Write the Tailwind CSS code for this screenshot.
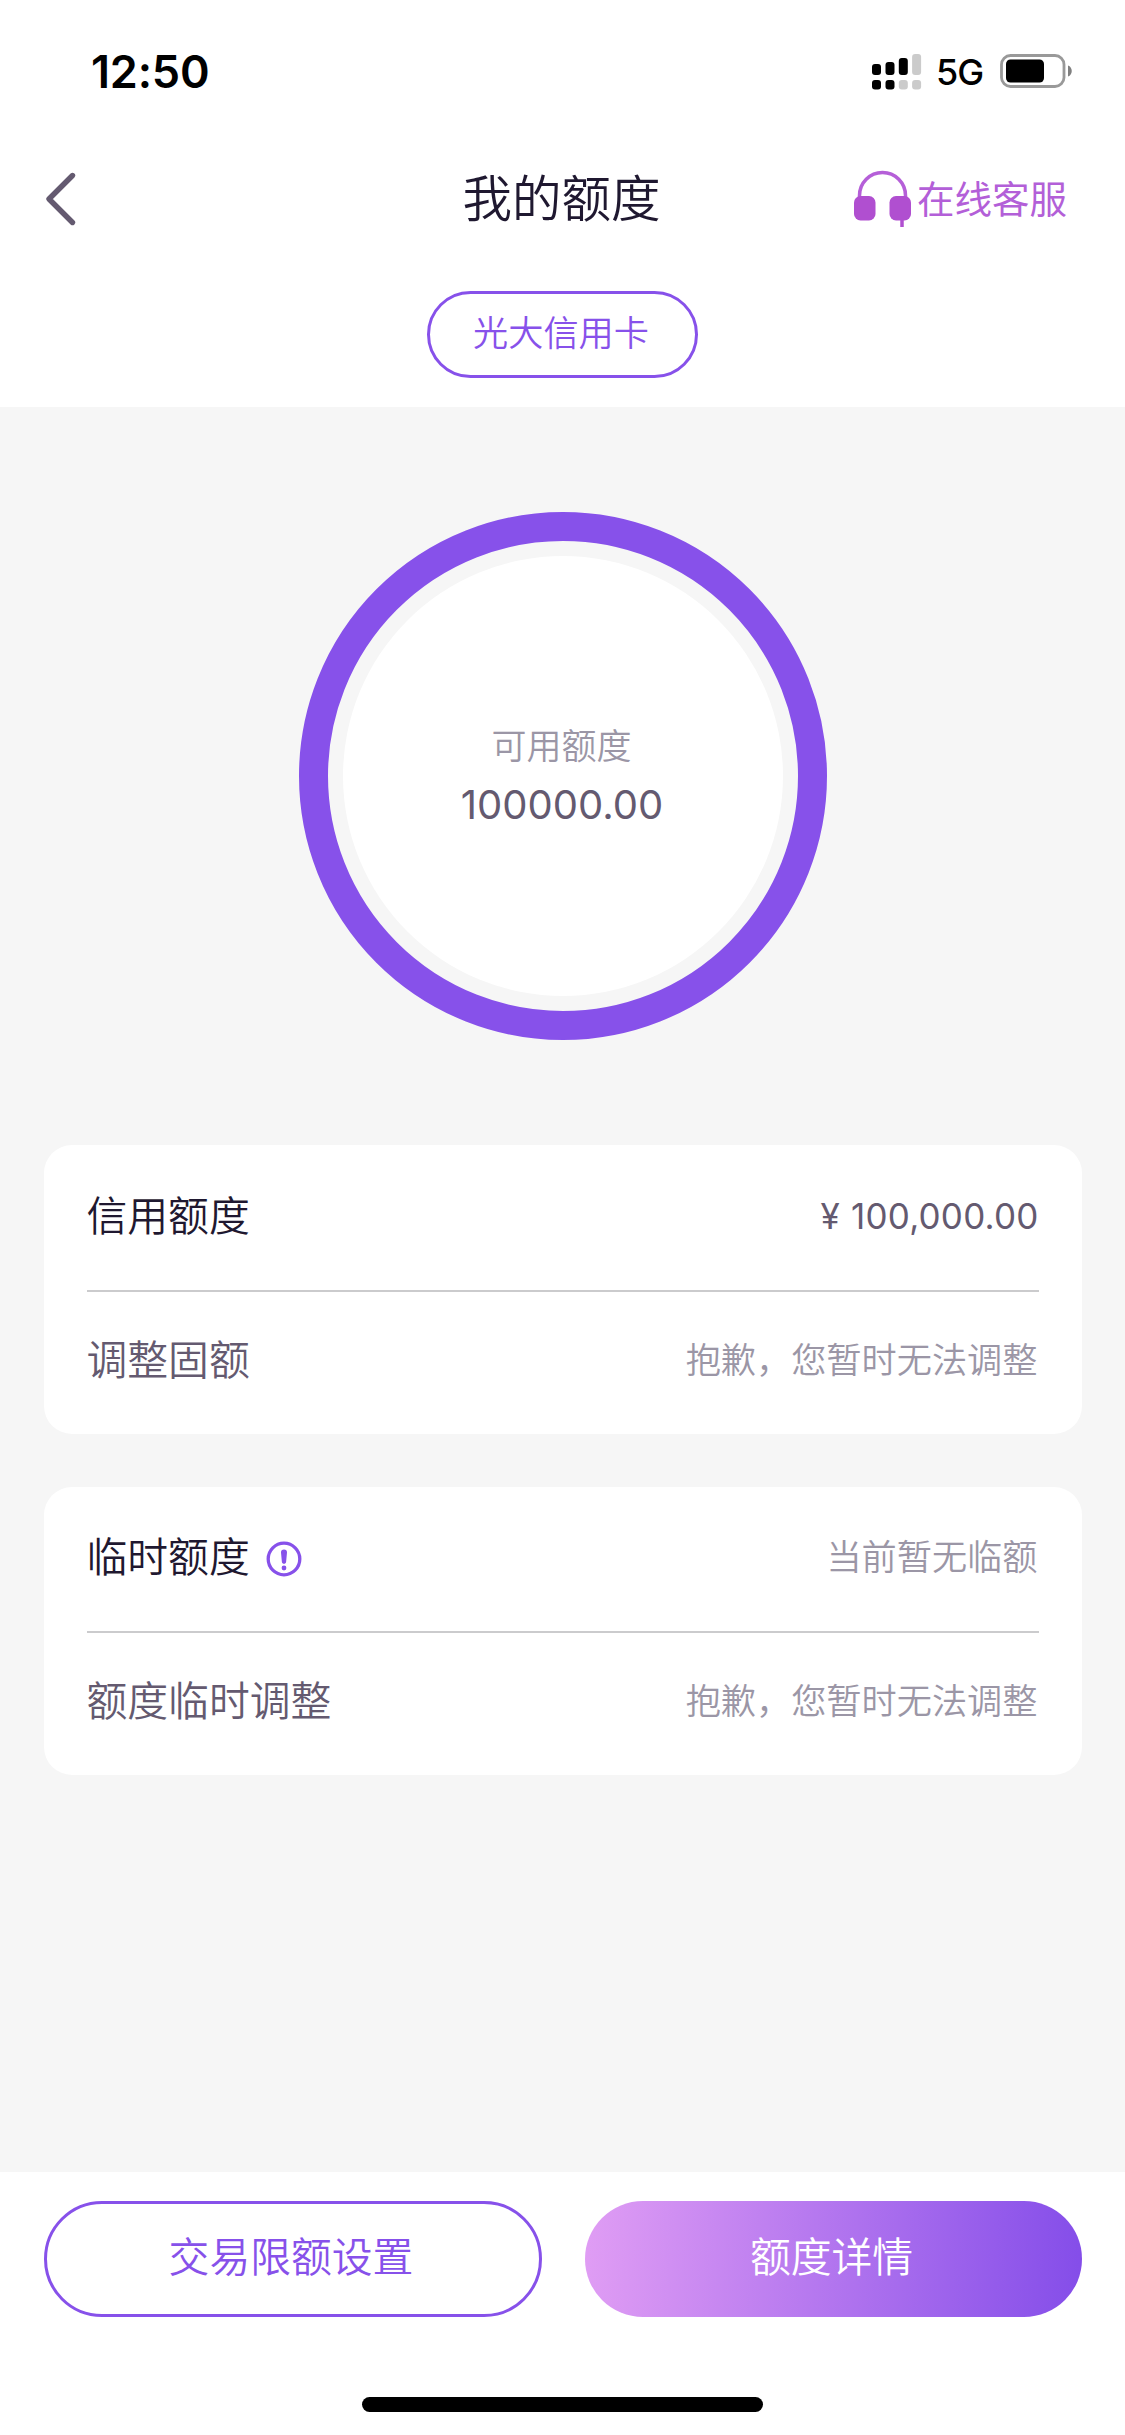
<!DOCTYPE html>
<html lang="zh-CN">
<head>
    <meta charset="UTF-8">
    <meta name="viewport" content="width=device-width, initial-scale=1.0">
    <title>我的额度</title>
    <script src="https://cdn.jsdelivr.net/npm/@tailwindcss/browser@4"></script>
    <style>
        body {
            font-family: 'Inter', 'Noto Sans CJK SC', sans-serif;
        }
    </style>
</head>
<body class="bg-[#f6f6f6] w-[1125px] h-[2435px] flex flex-col overflow-hidden font-[350]">
    <header class="bg-white h-[407px] shrink-0 flex flex-col">
        <!-- status bar -->
        <div class="h-[143px] pl-[91px] pr-[52px] flex items-center justify-between">
            <span class="text-[45px] leading-none font-semibold text-black tracking-[-0.2px]">12:50</span>
            <div class="flex items-center">
                <svg class="w-[50px] h-[36px]" viewBox="0 0 50 36">
                    <rect x="0" y="10" width="9" height="11" rx="3"/>
                    <rect x="13.5" y="8" width="9" height="13" rx="3"/>
                    <rect x="26.8" y="4" width="9" height="17" rx="3"/>
                    <rect x="40.1" y="0" width="9" height="21" rx="3" fill="#cbcbcb"/>
                    <rect x="0" y="26" width="9" height="9.5" rx="3"/>
                    <rect x="13.5" y="26" width="9" height="9.5" rx="3"/>
                    <rect x="26.8" y="26" width="9" height="9.5" rx="3" fill="#cbcbcb"/>
                    <rect x="40.1" y="26" width="9" height="9.5" rx="3" fill="#cbcbcb"/>
                </svg>
                <span class="ml-[14px] w-[49px] text-[36px] leading-none text-black font-medium tracking-[-1px]">5G</span>
                <svg class="ml-[15px] w-[73px] h-[36px]" viewBox="0 0 73 36">
                    <rect x="1.5" y="1.5" width="62.5" height="31" rx="9" fill="none" stroke="#999" stroke-width="2.8"/>
                    <rect x="6" y="5.5" width="38" height="23" rx="4.5"/>
                    <path d="M68 11.5c5 1.5 5 9.5 0 11z" fill="#808080"/>
                </svg>
            </div>
        </div>
        <!-- title bar -->
        <div class="h-[113px] grid grid-cols-3 items-center pl-[45px] pr-[58px]">
            <svg class="w-[32px] h-[56px] -mt-[2px]" viewBox="0 0 32 56" fill="none" stroke="#645a70" stroke-width="5.4" stroke-linecap="round" stroke-linejoin="round">
                <path d="M27.5 4.5L4 28l23.5 23.5"/>
            </svg>
            <h1 class="text-[49.5px] leading-none text-[#1f1830] text-center whitespace-nowrap pl-[11px]">我的额度</h1>
            <a class="flex items-center justify-end gap-[5px] text-[#b35fd8]">
                <svg class="w-[58px] h-[58px] -mt-[1px]" viewBox="0 0 58 58">
                    <path d="M5.5 29v-3.5a23 23 0 0 1 46 0v3.5" fill="none" stroke="#b55fd8" stroke-width="3.5"/>
                    <rect x="0" y="26" width="21.5" height="24.5" rx="6.5" fill="#b04fd0"/>
                    <rect x="35.5" y="26" width="21.5" height="24.5" rx="6.5" fill="#b04fd0"/>
                    <path d="M48 49v8" stroke="#b04fd0" stroke-width="3.5"/>
                </svg>
                <span class="text-[37.5px] leading-none whitespace-nowrap font-normal">在线客服</span>
            </a>
        </div>
        <div class="pt-[35px] flex justify-center">
            <button class="w-[271px] h-[87px] rounded-full border-3 border-[#8751ea] text-[35.2px] leading-none text-[#8751ea] pb-[2px] pr-[3px]">光大信用卡</button>
        </div>
    </header>

    <main class="flex-1 px-[43.5px]">
        <div class="mx-auto mt-[105px] size-[528px] rounded-full border-[29px] border-[#8751ea] flex items-center justify-center">
            <div class="size-[440px] rounded-full bg-white flex flex-col items-center pt-[171px]">
                <p class="text-[35px] leading-[38px] text-[#9b96a6] pr-[2px]">可用额度</p>
                <p class="mt-[20px] text-[40px] leading-[40px] font-normal text-[#645a70] pr-[1px]">100000.00</p>
            </div>
        </div>

        <section class="mt-[105px] h-[289px] rounded-[28px] bg-white px-[43px]">
            <div class="h-[147px] border-b-2 border-[#cbcbcd] flex items-center justify-between pb-[3px]">
                <span class="text-[40.8px] leading-none text-[#1f1830]">信用额度</span>
                <span class="text-[35px] leading-none font-normal text-[#645a70] tracking-[0.2px] [word-spacing:1px]">¥ 100,000.00</span>
            </div>
            <div class="h-[142px] flex items-center justify-between pb-[5px]">
                <span class="text-[40.8px] leading-none text-[#645a70]">调整固额</span>
                <span class="text-[35.2px] leading-none text-[#9b96a6] pt-[1px] pr-[1px]">抱歉，您暂时无法调整</span>
            </div>
        </section>

        <section class="mt-[53px] h-[288px] rounded-[28px] bg-white px-[43px]">
            <div class="h-[146px] border-b-2 border-[#cbcbcd] flex items-center justify-between pb-[3px]">
                <span class="flex items-center text-[40.8px] leading-none text-[#1f1830]">
                    临时额度
                    <svg class="ml-[16px] mt-[3px] size-[36px]" viewBox="0 0 36 36">
                        <circle cx="18" cy="18" r="15.8" fill="none" stroke="#8751ea" stroke-width="3.3"/>
                        <path d="M18 8.5c2 0 3.1 1.2 3 3l-.9 9.5c-.2 2.4-4 2.4-4.2 0l-.9-9.500c-.1-1.8 1-3 3-3z" fill="#8751ea"/>
                        <circle cx="18" cy="27" r="2.4" fill="#8751ea"/>
                    </svg>
                </span>
                <span class="text-[35.2px] leading-none text-[#9b96a6] pt-[1px] pr-[1px]">当前暂无临额</span>
            </div>
            <div class="h-[142px] flex items-center justify-between pb-[5px]">
                <span class="text-[40.8px] leading-none text-[#645a70]">额度临时调整</span>
                <span class="text-[35.2px] leading-none text-[#9b96a6] pt-[1px] pr-[1px]">抱歉，您暂时无法调整</span>
            </div>
        </section>
    </main>

    <footer class="h-[263px] shrink-0 bg-white px-[43.5px] pt-[29px] flex flex-col items-center">
        <div class="w-full flex justify-between">
            <button class="w-[498px] h-[116px] rounded-full border-3 border-[#8751ea] text-[40.8px] leading-none text-[#8751ea] pb-[3px] pr-[3px]">交易限额设置</button>
            <button class="w-[497px] h-[116px] rounded-full bg-[linear-gradient(92deg,#e09df4,#844de9)] text-[40.8px] leading-none text-white pb-[3px] pr-[3px]">额度详情</button>
        </div>
        <div class="mt-[80px] w-[401px] h-[15px] rounded-full bg-black"></div>
    </footer>
</body>
</html>
